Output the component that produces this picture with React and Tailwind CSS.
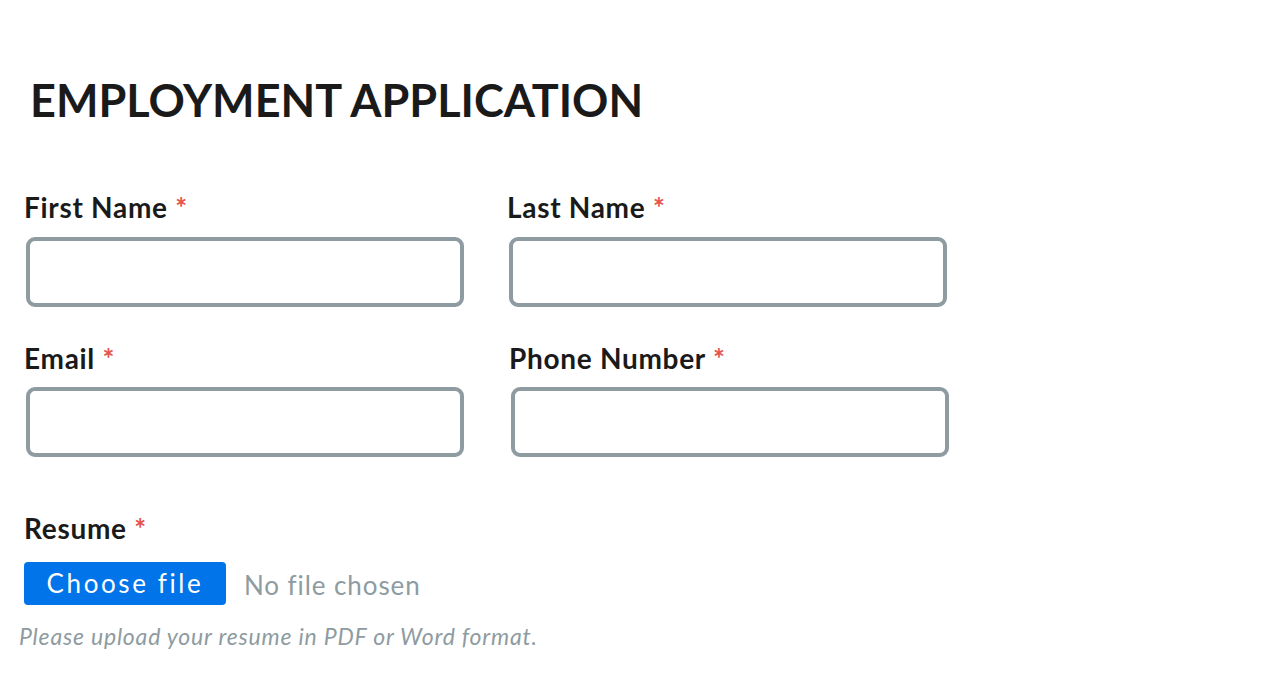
import React from 'react';

const Field = ({ label, className = '' }) => (
  <div className={className}>
    <label className="block text-[28px] leading-[1.2] font-bold tracking-[0.025em] text-[#1a1a1a] pt-[2px]">
      {label} <span className="text-[#e5534b]">*</span>
    </label>
    <input
      type="text"
      className="mt-[12px] ml-[2px] block w-[438px] h-[70px] rounded-[9px] border-4 border-[#8e9ba1] bg-white outline-none"
    />
  </div>
);

const App = () => {
  return (
    <div className="min-h-screen bg-white font-['Lato','Noto_Sans',sans-serif] pl-6 pt-[73px]">
      {/* Title */}
      <h1 className="ml-[6px] text-[45px] leading-[1.2] font-bold tracking-[0.0em] text-[#1a1a1a]">
        EMPLOYMENT APPLICATION
      </h1>

      {/* Name / contact fields */}
      <div className="mt-[62px] grid grid-cols-[483px_483px]">
        <Field label="First Name" />
        <Field label="Last Name" />
        <Field label="Email" className="mt-[33px]" />
        <Field label="Phone Number" className="mt-[33px] ml-[2px]" />
      </div>

      {/* Resume upload */}
      <div className="mt-[53px]">
        <label className="block text-[28px] leading-[1.2] font-bold tracking-[0.025em] text-[#1a1a1a] pt-[2px]">
          Resume <span className="text-[#e5534b]">*</span>
        </label>
        <div className="mt-[16px] flex items-center gap-[18px]">
          <button
            type="button"
            className="h-[43px] w-[202px] rounded-[4px] bg-[#0074e8] text-white text-[26px] tracking-[0.1em]"
          >
            Choose file
          </button>
          <span className="text-[26px] tracking-[0.035em] text-[#8e9ba1] pt-1">No file chosen</span>
          <input type="file" className="hidden" />
        </div>
        <p className="-ml-[5px] mt-[18px] text-[23px] leading-[1.2] italic tracking-[0.035em] text-[#8e9ba1]">
          Please upload your resume in PDF or Word format.
        </p>
      </div>
    </div>
  );
};

export default App;
